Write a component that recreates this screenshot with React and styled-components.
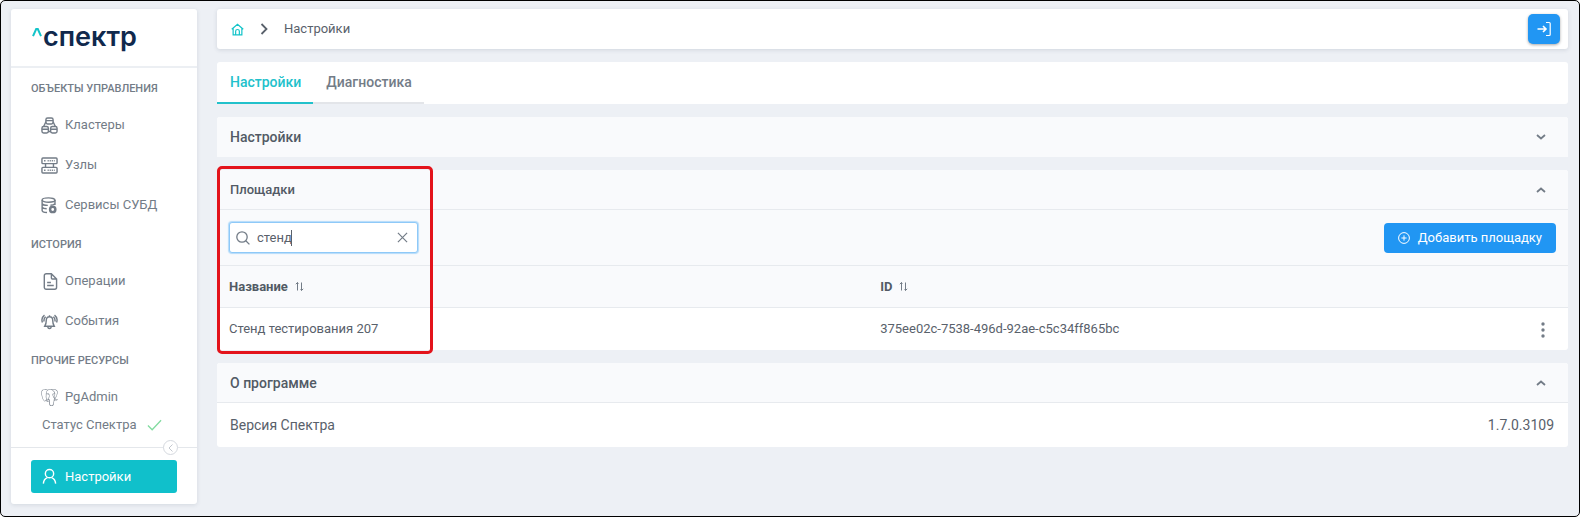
import { useState } from "react";
import styled, { createGlobalStyle, css } from "styled-components";
import { SiPostgresql } from "react-icons/si";

const MENU = [
    {
        title: "Объекты управления",
        items: [
            { label: "Кластеры", icon: ClusterIcon },
            { label: "Узлы", icon: NodesIcon },
            { label: "Сервисы СУБД", icon: DatabaseIcon },
        ],
    },
    {
        title: "История",
        items: [
            { label: "Операции", icon: FileIcon },
            { label: "События", icon: BellIcon },
        ],
    },
    {
        title: "Прочие ресурсы",
        items: [{ label: "PgAdmin", icon: PostgresIcon }],
    },
];

const SITES = [
    {
        id: "375ee02c-7538-496d-92ae-c5c34ff865bc",
        name: "Стенд тестирования 207",
    },
];

function App() {
    const [search, setSearch] = useState("стенд");

    const sites = SITES.filter(({ name }) =>
        name.toLowerCase().includes(search.toLowerCase())
    );

    return (
        <Frame>
            <GlobalStyle />
            <Sidebar>
                <Logo href="#">
                    <LogoMark viewBox="0 0 10 9">
                        <path d="M1 8.2 4.2 1h1.6L9 8.2" />
                    </LogoMark>
                    спектр
                </Logo>
                <Nav>
                    {MENU.map(({ title, items }) => (
                        <div key={title}>
                            <GroupTitle>{title}</GroupTitle>
                            {items.map(({ label, icon: Icon }) => (
                                <MenuLink key={label} href="#">
                                    <Icon />
                                    {label}
                                </MenuLink>
                            ))}
                        </div>
                    ))}
                    <Status href="#">
                        Статус Спектра
                        <StatusCheck viewBox="0 0 16 12">
                            <path d="M1 6.5 5.5 11 15 1" />
                        </StatusCheck>
                    </Status>
                </Nav>
                <SidebarFooter>
                    <Collapse type="button" aria-label="Свернуть меню">
                        <svg viewBox="0 0 8 10">
                            <path d="M5.5 1.5 2 5l3.5 3.5" />
                        </svg>
                    </Collapse>
                    <SettingsButton type="button">
                        <UserIcon />
                        Настройки
                    </SettingsButton>
                </SidebarFooter>
            </Sidebar>

            <Main>
                <TopBar>
                    <HomeLink href="#" aria-label="Главная">
                        <HomeIcon />
                    </HomeLink>
                    <Separator viewBox="0 0 8 12">
                        <path d="M1.5 1 6.5 6l-5 5" />
                    </Separator>
                    <Current>Настройки</Current>
                    <LogoutButton type="button" aria-label="Выйти">
                        <svg viewBox="0 0 16 16">
                            <path d="M1.5 8H10M7 5l3 3-3 3" strokeWidth="1.6" />
                            <path d="M10 1.5h3.2a1 1 0 0 1 1 1v11a1 1 0 0 1-1 1H10" />
                        </svg>
                    </LogoutButton>
                </TopBar>

                <Tabs role="tablist">
                    <Tab type="button" role="tab" aria-selected="true" $active>
                        Настройки
                    </Tab>
                    <Tab type="button" role="tab" aria-selected="false">
                        Диагностика
                    </Tab>
                </Tabs>

                <Panel>
                    <PanelHeader type="button" aria-expanded="false">
                        Настройки
                        <Chevron />
                    </PanelHeader>
                </Panel>

                <Panel>
                    <PanelHeader type="button" aria-expanded="true" $open $small>
                        Площадки
                        <Chevron up />
                    </PanelHeader>
                    <Toolbar>
                        <SearchBox>
                            <svg viewBox="0 0 14 14">
                                <circle cx="6" cy="6" r="5.2" />
                                <path d="m9.8 9.8 3.6 3.6" />
                            </svg>
                            <SearchInput
                                type="text"
                                aria-label="Поиск площадки"
                                value={search}
                                onChange={(e) => setSearch(e.target.value)}
                            />
                            <Caret />
                            <ClearButton
                                type="button"
                                aria-label="Очистить"
                                onClick={() => setSearch("")}
                            >
                                <svg viewBox="0 0 12 12">
                                    <path d="m1 1 10 10M11 1 1 11" />
                                </svg>
                            </ClearButton>
                        </SearchBox>
                        <AddButton type="button">
                            <svg viewBox="0 0 12 12">
                                <circle cx="6" cy="6" r="5.4" />
                                <path d="M6 3.4v5.2M3.4 6h5.2" />
                            </svg>
                            Добавить площадку
                        </AddButton>
                    </Toolbar>
                    <Table>
                        <thead>
                            <tr>
                                <Th $width="48.2%">
                                    Название
                                    <SortIcon />
                                </Th>
                                <Th>
                                    ID
                                    <SortIcon />
                                </Th>
                                <Th $width="60px" />
                            </tr>
                        </thead>
                        <tbody>
                            {sites.map(({ id, name }) => (
                                <tr key={id}>
                                    <Td>{name}</Td>
                                    <Td>{id}</Td>
                                    <Td $right>
                                        <MoreButton
                                            type="button"
                                            aria-label="Действия"
                                        >
                                            <svg viewBox="0 0 4 16">
                                                <circle cx="2" cy="2" r="1.7" />
                                                <circle cx="2" cy="8" r="1.7" />
                                                <circle cx="2" cy="14" r="1.7" />
                                            </svg>
                                        </MoreButton>
                                    </Td>
                                </tr>
                            ))}
                        </tbody>
                    </Table>
                    <Highlight />
                </Panel>

                <Panel>
                    <PanelHeader type="button" aria-expanded="true" $open>
                        О программе
                        <Chevron up />
                    </PanelHeader>
                    <InfoRow>
                        <span>Версия Спектра</span>
                        <span>1.7.0.3109</span>
                    </InfoRow>
                </Panel>
            </Main>
        </Frame>
    );
}

function ClusterIcon() {
    return (
        <LineIcon viewBox="0 0 18 18">
            <rect x="5.2" y="1" width="7.6" height="6.4" rx="1.8" />
            <rect x="1" y="10" width="6.8" height="7" rx="1.8" />
            <rect x="10.2" y="10" width="6.8" height="7" rx="1.8" />
            <path d="M5.2 3.8h7.6M1 13h6.8M10.2 13H17M7.8 15.3h2.4M5.2 5 2.8 10M12.8 5l2.4 5" />
        </LineIcon>
    );
}

function NodesIcon() {
    return (
        <LineIcon viewBox="0 0 18 18">
            <rect x="1" y="1" width="16" height="6" rx="1" />
            <rect x="1" y="11" width="16" height="6" rx="1" />
            <path d="M4 3.2v1.6M4 13.2v1.6M4.8 7v4M13.2 7v4" />
            <path d="M7 4h7.5M7 14h7.5" strokeDasharray="1.2 1" />
        </LineIcon>
    );
}

function DatabaseIcon() {
    return (
        <LineIcon viewBox="0 0 18 18">
            <ellipse cx="8" cy="3.2" rx="6.8" ry="2.3" />
            <path d="M1.2 3.2v11c0 1.2 2.4 2 5.2 2.2M14.8 3.2v5.3M1.2 7c.6 1.2 3.2 1.9 6 1.9M1.2 10.6c.6 1 2.6 1.7 4.8 1.8M10 8.7c2-.1 4-.7 4.8-1.7" />
            <circle cx="12.4" cy="13.2" r="2.8" strokeWidth="2.6" />
        </LineIcon>
    );
}

function FileIcon() {
    return (
        <LineIcon viewBox="0 0 18 18">
            <path d="M11 .8H5.5a2 2 0 0 0-2 2v12.4a2 2 0 0 0 2 2h9a2 2 0 0 0 2-2V6.3L11 .8v4.5a1 1 0 0 0 1 1h4.5M6.5 10h4M6.5 13.2h7" />
        </LineIcon>
    );
}

function BellIcon() {
    return (
        <LineIcon viewBox="0 0 18 18">
            <path d="M9 4c-2.3 0-3.4 1.6-3.4 3.8 0 3.2-.7 4.7-1.6 6.2h10c-.9-1.5-1.6-3-1.6-6.2C12.4 5.6 11.3 4 9 4ZM9 4V2.3M7.2 14c0 3.2 3.6 3.2 3.6 0" />
            <path d="M3.7 2.2C1.3 4 .5 7.2 1.5 10M5 4C3.3 5.3 2.9 7.3 3.3 9M14.3 2.2c2.4 1.8 3.2 5 2.2 7.8M13 4c1.7 1.3 2.1 3.3 1.7 5" />
        </LineIcon>
    );
}

function PostgresIcon() {
    return (
        <SolidIcon>
            <SiPostgresql />
        </SolidIcon>
    );
}

function UserIcon() {
    return (
        <LineIcon viewBox="0 0 18 18">
            <circle cx="9" cy="6" r="4.4" />
            <path d="M2.5 16.5c.3-3.5 2-5.5 4.3-6.3M15.5 16.5c-.3-3.5-2-5.5-4.3-6.3" />
        </LineIcon>
    );
}

function HomeIcon() {
    return (
        <svg viewBox="0 0 14 14">
            <path d="M.8 6.8 7 1.3l6.2 5.5M2.3 5.8v7h9.4v-7M5 12.8V9a2 2 0 0 1 4 0v3.8" />
        </svg>
    );
}

function Chevron({ up }) {
    return (
        <svg viewBox="0 0 10 6">
            <path d={up ? "M1 5l4-3.5L9 5" : "M1 1l4 3.5L9 1"} />
        </svg>
    );
}

function SortIcon() {
    return (
        <SortSvg viewBox="0 0 9 9">
            <path d="M2.5 8.5v-8M.8 2.2 2.5.5l1 1M6.5.5v8M5.5 7.5l1 1 1.7-1.7" />
        </SortSvg>
    );
}

const GlobalStyle = createGlobalStyle`
    * {
        box-sizing: border-box;
    }

    body {
        margin: 0;

        color: #59616b;
        background: #fff;
        font: 13px/20px Roboto, "Noto Sans", sans-serif;
    }

    button,
    input {
        margin: 0;
        padding: 0;

        border: 0;
        background: none;
        color: inherit;
        font: inherit;
    }

    a {
        color: inherit;
        text-decoration: none;
    }

    svg {
        flex-shrink: 0;

        fill: none;
        stroke: currentColor;
    }
`;

const Frame = styled.div`
    display: flex;
    gap: 20px;
    min-height: 100vh;
    padding: 8px 11px 12px 10px;

    border: 1px solid #000;
    border-radius: 5px;
    background: #edf0f5;
`;

const Sidebar = styled.aside`
    display: flex;
    flex-direction: column;
    width: 186px;
    flex-shrink: 0;

    border-radius: 3px;
    background: #fff;
    box-shadow: 0 1px 4px rgba(60, 75, 100, 0.14);
`;

const Logo = styled.a`
    display: flex;
    align-items: center;
    height: 59px;
    padding: 0 0 2px 21px;

    border-bottom: 2px solid #eceff3;
    color: #10294d;
    font: 600 27px/36px Inter, sans-serif;
`;

const LogoMark = styled.svg`
    width: 10px;
    height: 9px;
    margin: 0 1px 8px 0;

    stroke: #14c4c9;
    stroke-width: 2;
`;

const Nav = styled.nav`
    flex: 1;
    padding: 1px 0 13px;

    color: #737c87;
`;

const GroupTitle = styled.h2`
    margin: 0;
    padding: 12px 20px 8px;

    font-size: 11px;
    font-weight: 500;
    line-height: 16px;
    text-transform: uppercase;
`;

const MenuLink = styled.a`
    display: flex;
    align-items: center;
    gap: 7px;
    height: 40px;
    padding-left: 30px;
`;

const LineIcon = styled.svg`
    width: 17px;
    height: 17px;

    stroke-width: 1.5;
`;

const SolidIcon = styled.span`
    display: flex;

    svg {
        width: 17px;
        height: 17px;

        fill: currentColor;
        stroke: none;
    }
`;

const Status = styled.a`
    display: flex;
    align-items: center;
    gap: 10px;
    padding-left: 31px;

    line-height: 16px;
`;

const StatusCheck = styled.svg`
    width: 15px;
    height: 12px;

    stroke: #82dba0;
    stroke-width: 1.4;
`;

const SidebarFooter = styled.div`
    position: relative;
    padding: 12px 20px 11px;

    border-top: 1px solid #e4e7eb;
`;

const Collapse = styled.button`
    position: absolute;
    top: -8px;
    right: 19px;

    display: flex;
    justify-content: center;
    align-items: center;
    width: 15px;
    height: 15px;

    border: 1px solid #d5d9df;
    border-radius: 50%;
    background: #fff;
    color: #c3c8cf;

    svg {
        width: 8px;
        height: 10px;
    }
`;

const SettingsButton = styled.button`
    display: flex;
    align-items: center;
    gap: 7px;
    width: 100%;
    height: 33px;
    padding-left: 10px;

    border-radius: 3px;
    background: #10c0cb;
    color: #fff;
`;

const Main = styled.main`
    display: flex;
    flex-direction: column;
    flex: 1;
    gap: 13px;
    min-width: 0;
`;

const TopBar = styled.header`
    display: flex;
    align-items: center;
    height: 40px;
    padding: 0 8px 0 14px;

    border-radius: 3px;
    background: #fff;
    box-shadow: 0 1px 4px rgba(60, 75, 100, 0.16);
`;

const HomeLink = styled.a`
    display: flex;

    color: #14c4c9;

    svg {
        width: 13px;
        height: 13px;

        stroke-width: 1.3;
    }
`;

const Separator = styled.svg`
    width: 8px;
    height: 12px;
    margin: 0 16px;

    stroke-width: 1.8;
`;

const Current = styled.span`
    flex: 1;
`;

const LogoutButton = styled.button`
    display: flex;
    justify-content: center;
    align-items: center;
    width: 32px;
    height: 30px;

    border-radius: 5px;
    background: #2196f3;
    box-shadow: 0 1px 3px rgba(0, 0, 0, 0.35);
    color: #fff;

    svg {
        width: 16px;
        height: 16px;

        stroke-width: 1.2;
    }
`;

const Tabs = styled.div`
    display: flex;
    height: 42px;

    border-radius: 3px;
    background: #fff;
`;

const Tab = styled.button`
    padding: 0 12px 0 13px;

    border-bottom: 2px solid #e3e5e9;
    color: #737c87;
    font-size: 14px;
    font-weight: 500;

    ${({ $active }) =>
        $active &&
        css`
            border-color: #22c1cb;
            color: #22c1cb;
        `}
`;

const Panel = styled.section`
    position: relative;

    border-radius: 3px;
    background: #fff;
`;

const PanelHeader = styled.button`
    display: flex;
    justify-content: space-between;
    align-items: center;
    width: 100%;
    height: 40px;
    padding: 0 22px 0 13px;

    border-bottom: 1px solid ${({ $open }) => ($open ? "#e7eaee" : "#f9fafc")};
    border-radius: 3px 3px 0 0;
    background: #f9fafc;
    color: #525a65;
    font-size: ${({ $small }) => ($small ? "13px" : "14px")};
    font-weight: 500;

    svg {
        width: 10px;
        height: 6px;

        stroke: #737c87;
        stroke-width: 1.8;
    }
`;

const Toolbar = styled.div`
    display: flex;
    justify-content: space-between;
    align-items: center;
    height: 56px;
    padding: 0 12px;

    border-bottom: 1px solid #e7eaee;
    background: #f9fafc;
`;

const SearchBox = styled.div`
    position: relative;

    display: flex;
    align-items: center;
    gap: 7px;
    width: 189px;
    height: 31px;
    padding: 0 9px 0 6px;

    border: 1px solid #8ec9f8;
    border-radius: 3px;
    background: #fff;
    box-shadow: 0 0 1px 1px #b4dbfa;

    svg {
        width: 14px;
        height: 14px;

        stroke: #737c87;
        stroke-width: 1.3;
    }
`;

const SearchInput = styled.input`
    flex: 1;
    min-width: 0;

    outline: none;
`;

const Caret = styled.span`
    position: absolute;
    top: 7px;
    left: 61px;

    width: 1px;
    height: 16px;

    background: #59616b;
`;

const ClearButton = styled.button`
    display: flex;

    svg {
        width: 11px;
        height: 11px;
    }
`;

const AddButton = styled.button`
    display: flex;
    align-items: center;
    gap: 8px;
    height: 30px;
    padding: 0 14px;

    border-radius: 4px;
    background: #2196f3;
    color: #fff;

    svg {
        width: 12px;
        height: 12px;
    }
`;

const Table = styled.table`
    width: 100%;

    border-spacing: 0;
    table-layout: fixed;
`;

const Th = styled.th`
    width: ${({ $width }) => $width};
    height: 42px;
    padding: 0 12px;

    border-bottom: 1px solid #e7eaee;
    background: #f9fafc;
    color: #525a65;
    font-weight: 700;
    text-align: left;
`;

const SortSvg = styled.svg`
    width: 9px;
    height: 9px;
    margin-left: 7px;

    stroke: #737c87;
`;

const Td = styled.td`
    height: 42px;
    padding: 0 12px;

    ${({ $right }) =>
        $right &&
        css`
            padding-right: 23px;

            text-align: right;
        `}
`;

const MoreButton = styled.button`
    vertical-align: middle;

    svg {
        display: block;
        width: 4px;
        height: 16px;

        fill: #737c87;
        stroke: none;
    }
`;

const Highlight = styled.div`
    position: absolute;
    top: -4px;
    bottom: -4px;
    left: 0;

    width: 216px;

    border: 3px solid #e3131b;
    border-radius: 5px;
    pointer-events: none;
`;

const InfoRow = styled.div`
    display: flex;
    justify-content: space-between;
    align-items: center;
    height: 44px;
    padding: 0 14px 0 13px;

    font-size: 14px;
`;

export default App;
